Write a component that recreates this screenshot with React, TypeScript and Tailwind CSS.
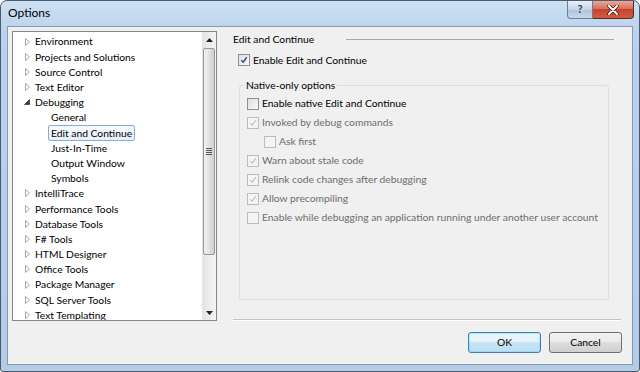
import React from "react";

const font = { fontFamily: 'Lato, "Open Sans", Arial, sans-serif' };

type Node = { label: string; level: 0 | 1; state?: "open" | "closed"; selected?: boolean };

const tree: Node[] = [
  { label: "Environment", level: 0, state: "closed" },
  { label: "Projects and Solutions", level: 0, state: "closed" },
  { label: "Source Control", level: 0, state: "closed" },
  { label: "Text Editor", level: 0, state: "closed" },
  { label: "Debugging", level: 0, state: "open" },
  { label: "General", level: 1 },
  { label: "Edit and Continue", level: 1, selected: true },
  { label: "Just-In-Time", level: 1 },
  { label: "Output Window", level: 1 },
  { label: "Symbols", level: 1 },
  { label: "IntelliTrace", level: 0, state: "closed" },
  { label: "Performance Tools", level: 0, state: "closed" },
  { label: "Database Tools", level: 0, state: "closed" },
  { label: "F# Tools", level: 0, state: "closed" },
  { label: "HTML Designer", level: 0, state: "closed" },
  { label: "Office Tools", level: 0, state: "closed" },
  { label: "Package Manager", level: 0, state: "closed" },
  { label: "SQL Server Tools", level: 0, state: "closed" },
  { label: "Text Templating", level: 0, state: "closed" },
];

function Expander({ state }: { state?: "open" | "closed" }) {
  if (!state) return <span className="w-[10px]" />;
  return (
    <svg width="10" height="10" viewBox="0 0 10 10" className="shrink-0">
      {state === "closed" ? (
        <path d="M3.5 1.5 L7.5 5 L3.5 8.5 Z" fill="#fff" stroke="#a6a6a6" strokeWidth="1" />
      ) : (
        <path d="M7.5 2.5 L7.5 7.5 L2.5 7.5 Z" fill="#3c3c3c" stroke="#3c3c3c" strokeWidth="0.8" />
      )}
    </svg>
  );
}

function Check({ checked, disabled }: { checked?: boolean; disabled?: boolean }) {
  return (
    <span
      className={`shrink-0 w-[12px] h-[12px] border flex items-center justify-center ${
        disabled ? "border-[#bcbcbc] bg-[#f4f4f4]" : "border-[#8e8f8f] bg-gradient-to-br from-[#dcdcdc] to-[#fbfbfb]"
      }`}
    >
      {checked && (
        <svg width="8" height="8" viewBox="0 0 9 9">
          <path
            d="M1.5 4.8 L3.6 7 L7.6 1.4"
            fill="none"
            stroke={disabled ? "#a9a9a9" : "#2a4a8f"}
            strokeWidth={disabled ? 1.1 : 1.6}
          />
        </svg>
      )}
    </span>
  );
}

function Option({ label, checked, disabled, indent }: { label: string; checked?: boolean; disabled?: boolean; indent?: boolean }) {
  return (
    <div className={`h-[19px] flex items-center gap-[3px] ${indent ? "pl-[24px]" : "pl-[7px]"}`}>
      <Check checked={checked} disabled={disabled} />
      <span className={`text-[10.3px] leading-none whitespace-nowrap ${disabled ? "text-[#6d6d6d]" : "text-black"}`}>{label}</span>
    </div>
  );
}

function Button({ label, primary }: { label: string; primary?: boolean }) {
  return (
    <div
      className={`w-[73px] h-[21px] rounded-[3px] border flex items-center justify-center text-[10.3px] text-black ${
        primary
          ? "border-[#3c7fb1] bg-[linear-gradient(#eaf6fd_0%,#e3f2fb_50%,#c8e4f5_50%,#bde0f4_100%)] shadow-[inset_0_0_0_1px_#48d1ff55]"
          : "border-[#707070] bg-[linear-gradient(#f2f2f2_0%,#ebebeb_50%,#dddddd_50%,#cfcfcf_100%)]"
      }`}
    >
      {label}
    </div>
  );
}

export default function App() {
  return (
    <div className="w-[640px] h-[372px] bg-white" style={font}>
      <div className="w-[640px] h-[372px] rounded-t-[7px] rounded-b-[3px] border border-[#4a5b70] bg-[linear-gradient(#cfe1f3_0px,#bad2ec_30px,#b4cce6_100%)] flex flex-col">
        {/* title bar */}
        <div className="h-[25px] flex items-start shrink-0">
          <span className="ml-[7px] mt-[3px] text-[12px] text-black">Options</span>
          <div className="ml-auto mr-[5px] flex">
            <div className="w-[26px] h-[18px] rounded-bl-[4px] border border-t-0 border-[#6f7f93] bg-[linear-gradient(#e8f0f8,#c4d5e8_50%,#aec3da_51%,#c8d8ea)] flex items-center justify-center text-[11px] text-[#2d3c50] font-bold">
              ?
            </div>
            <div className="w-[41px] h-[18px] rounded-br-[4px] border border-t-0 border-l-0 border-[#5c2a22] bg-[linear-gradient(#e9a99c,#d8705c_45%,#c7442c_50%,#d45c40)] flex items-center justify-center">
              <svg width="12" height="10" viewBox="0 0 12 10">
                <path d="M2 1 L10 9 M10 1 L2 9" stroke="#2e1510" strokeWidth="3.4" strokeLinecap="round" />
                <path d="M2 1 L10 9 M10 1 L2 9" stroke="#fff" strokeWidth="2" strokeLinecap="round" />
              </svg>
            </div>
          </div>
        </div>

        {/* client area */}
        <div className="mx-[6px] mb-[6px] flex-1 border border-[#8799ae] bg-[#f0f0f0] flex">
          {/* tree */}
          <div className="ml-[4px] mt-[4px] w-[205px] h-[290px] border border-[#828790] bg-white flex overflow-hidden">
            <div className="flex-1 pt-[2px] pl-[9px] overflow-hidden">
              {tree.map((n) => (
                <div key={n.label} className={`h-[15.2px] flex items-center ${n.level === 1 ? "pl-[29px]" : ""}`}>
                  {n.level === 0 && <Expander state={n.state} />}
                  <span
                    className={`text-[10.3px] leading-none whitespace-nowrap ${n.level === 0 ? "ml-[3px]" : ""} ${
                      n.selected ? "-ml-[3px] px-[2px] py-[2px] rounded-[2px] border border-[#84acdd] bg-[linear-gradient(#f6fbfe,#e6f1fb)]" : ""
                    }`}
                  >
                    {n.label}
                  </span>
                </div>
              ))}
            </div>
            {/* scrollbar */}
            <div className="w-[14px] bg-[linear-gradient(90deg,#e4e4e4,#f4f4f4)] flex flex-col items-center">
              <div className="h-[15px] flex items-center justify-center">
                <svg width="7" height="4" viewBox="0 0 7 4"><path d="M0 4 L3.5 0 L7 4 Z" fill="#222" /></svg>
              </div>
              <div className="mt-[1px] w-[12px] h-[207px] rounded-[2px] border border-[#979797] bg-[linear-gradient(90deg,#f2f2f2,#e2e2e2_50%,#cfcfcf)] flex items-center justify-center">
                <div className="flex flex-col gap-[1px]">
                  <span className="w-[6px] h-[1px] bg-[#555]" />
                  <span className="w-[6px] h-[1px] bg-[#555]" />
                  <span className="w-[6px] h-[1px] bg-[#555]" />
                  <span className="w-[6px] h-[1px] bg-[#555]" />
                </div>
              </div>
              <div className="mt-auto h-[15px] flex items-center justify-center">
                <svg width="7" height="4" viewBox="0 0 7 4"><path d="M0 0 L3.5 4 L7 0 Z" fill="#222" /></svg>
              </div>
            </div>
          </div>

          {/* right side */}
          <div className="ml-[16px] w-[389px] flex flex-col">
            <div className="mt-[5px] h-[14px] flex items-center">
              <span className="text-[10.3px] leading-none text-black">Edit and Continue</span>
              <span className="ml-[32px] mr-[8px] flex-1 h-[1px] bg-[#a8a8a8]" />
            </div>
            <div className="mt-[5px] h-[18px] flex items-center gap-[3px] pl-[5px]">
              <Check checked />
              <span className="text-[10.3px] leading-none text-black">Enable Edit and Continue</span>
            </div>

            {/* group box */}
            <div className="relative ml-[6px] mt-[16px] w-[370px] h-[215px] rounded-[3px] border border-[#d5dfe5]">
              <span className="absolute -top-[8px] left-[4px] px-[2px] bg-[#f0f0f0] text-[10.3px] leading-[14px] text-black">
                Native-only options
              </span>
              <div className="pt-[8px]">
                <Option label="Enable native Edit and Continue" />
                <Option label="Invoked by debug commands" checked disabled />
                <Option label="Ask first" disabled indent />
                <Option label="Warn about stale code" checked disabled />
                <Option label="Relink code changes after debugging" checked disabled />
                <Option label="Allow precompiling" checked disabled />
                <Option label="Enable while debugging an application running under another user account" disabled />
              </div>
            </div>

            <div className="mt-[19px] w-[388px] h-[2px] border-t border-[#c3c3c3] border-b border-b-white" />

            <div className="mt-[11px] flex justify-end gap-[8px]">
              <Button label="OK" primary />
              <Button label="Cancel" />
            </div>
          </div>
        </div>
      </div>
    </div>
  );
}
